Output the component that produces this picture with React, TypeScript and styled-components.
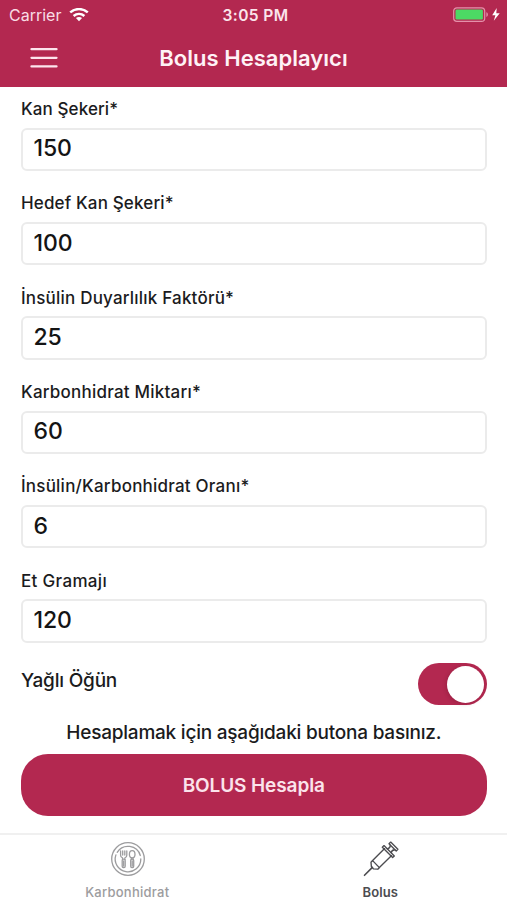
import React, { useState } from "react";
import styled, { createGlobalStyle } from "styled-components";

const brand = "#b32850";

const GlobalStyle = createGlobalStyle`
  * { box-sizing: border-box; }
  body { margin: 0; background: #fff; font-family: Inter, "Liberation Sans", sans-serif; color: #1b1b1d; }
  button, input { font-family: inherit; }
`;

const Screen = styled.div`
  width: 507px;
  height: 900px;
  display: flex;
  flex-direction: column;
  overflow: hidden;
  background: #fff;
`;

const Header = styled.header`
  height: 87px;
  flex: none;
  background: ${brand};
  color: #fff;
`;

const StatusBar = styled.div`
  height: 29px;
  display: grid;
  grid-template-columns: 1fr auto 1fr;
  align-items: center;
  padding: 1px 6px 0 9px;
`;

const Carrier = styled.div`
  display: flex;
  align-items: center;
  gap: 8px;
  font-size: 16px;
  line-height: 20px;
  color: #f9dce5;
  letter-spacing: 0;
`;

const Clock = styled.div`
  font-size: 15.6px;
  line-height: 20px;
  padding: 1px 0 0 1px;
  font-weight: 600;
  color: #fbe4eb;
  letter-spacing: 0.35px;
`;

const Power = styled.div`
  display: flex;
  justify-content: flex-end;
  align-items: center;
`;

const TitleBar = styled.div`
  height: 58px;
  display: grid;
  grid-template-columns: 88px 1fr 88px;
  align-items: center;
`;

const MenuButton = styled.button`
  display: flex;
  border: 0;
  padding: 0;
  margin-left: 30px;
  width: 28px;
  background: none;
`;

const Title = styled.h1`
  margin: 0;
  text-align: center;
  font-size: 22px;
  line-height: 28px;
  font-weight: 600;
  color: #fff2f6;
  letter-spacing: 0.03px;
`;

const Form = styled.main`
  flex: 1;
  padding: 9px 20.5px 0 21px;
`;

const Field = styled.label`
  display: block;
  height: 94.35px;
`;

const Label = styled.span<{ $spacing: number }>`
  display: block;
  height: 31.5px;
  padding-top: 1px;
  line-height: 25px;
  font-size: 17px;
  font-weight: 500;
  white-space: nowrap;
  letter-spacing: ${(p) => p.$spacing}px;
`;

const Input = styled.input`
  display: block;
  width: 100%;
  height: 43.5px;
  padding: 0 10.5px 2px;
  border: 2px solid #ebebeb;
  border-radius: 6px;
  outline: none;
  background: #fff;
  color: #141414;
  font-size: 23px;
  font-weight: 500;
  letter-spacing: -0.1px;
`;

const ToggleRow = styled.div`
  display: flex;
  justify-content: space-between;
  height: 58px;
`;

const ToggleLabel = styled.span`
  font-size: 19px;
  line-height: 24px;
  padding-top: 7px;
  font-weight: 500;
  letter-spacing: -0.2px;
`;

const Toggle = styled.button<{ $on: boolean }>`
  display: flex;
  justify-content: ${(p) => (p.$on ? "flex-end" : "flex-start")};
  align-items: center;
  width: 69px;
  height: 42px;
  margin-top: 1px;
  padding: 0 2.5px;
  border: 0;
  border-radius: 21px;
  background: ${(p) => (p.$on ? brand : "#ddd")};
`;

const Knob = styled.span`
  width: 37px;
  height: 37px;
  border-radius: 50%;
  background: #fff;
  box-shadow: -1px 1px 4px rgba(60, 0, 20, 0.2);
`;

const Hint = styled.p`
  margin: 0;
  height: 34px;
  padding-top: 1px;
  line-height: 24px;
  text-align: center;
  white-space: nowrap;
  font-size: 19px;
  font-weight: 500;
  letter-spacing: -0.22px;
`;

const Submit = styled.button`
  display: block;
  width: 100%;
  height: 62px;
  padding: 0;
  border: 0;
  border-radius: 27px;
  background: ${brand};
  color: #fbe3eb;
  font-size: 19px;
  font-weight: 600;
  letter-spacing: -0.1px;
`;

const TabBar = styled.nav`
  height: 67px;
  flex: none;
  display: grid;
  grid-template-columns: 1fr 1fr;
  border-top: 2px solid #f0f0f0;
`;

const Tab = styled.a<{ $active?: boolean }>`
  display: flex;
  flex-direction: column;
  align-items: center;
  padding: 6px 0 0 ${(p) => (p.$active ? 0 : 1)}px;
  gap: 5px;
  color: ${(p) => (p.$active ? "#4c4c50" : "#9c9c9e")};
  font-size: 13px;
  line-height: 20px;
  font-weight: ${(p) => (p.$active ? 600 : 500)};
  letter-spacing: ${(p) => (p.$active ? 0.1 : 0.25)}px;

  svg { margin-left: 2px; }
`;

const WifiIcon = () => (
  <svg width="20" height="15" viewBox="0 0 20 15" fill="none" stroke="#fff" strokeWidth="2.5">
    <path d="M1.2 4.4C6.2 0 13.8 0 18.8 4.4" />
    <path d="M4.6 8C7.8 5.2 12.2 5.2 15.4 8" />
    <path d="M10 13.2L6.9 10.1C8.6 8.6 11.4 8.6 13.1 10.1Z" fill="#fff" stroke="none" />
  </svg>
);

const BatteryIcon = () => (
  <svg width="48" height="16" viewBox="0 0 48 16">
    <rect x="0.7" y="0.8" width="31" height="13.6" rx="3.2" fill="none" stroke="#e491aa" strokeWidth="1.2" />
    <rect x="2.5" y="2.6" width="27.4" height="10" rx="1.4" fill="#4cd964" />
    <path d="M33.4 5.3C35.4 6 35.4 9.2 33.4 9.9Z" fill="#e491aa" />
    <path d="M43.7 1L39.2 8.3H42.4L40.8 13.8L46.7 6.3H43.3Z" fill="#fff" />
  </svg>
);

const MenuIcon = () => (
  <svg width="28" height="22" viewBox="0 0 28 22" stroke="#fde5ed" strokeWidth="2.3" strokeLinecap="round">
    <path d="M1.5 2.2H26.5M1.5 10.8H26.5M1.5 19.4H26.5" />
  </svg>
);

const PlateIcon = () => (
  <svg width="36" height="36" viewBox="0 0 36 36" fill="none" stroke="currentColor" strokeWidth="1.3" strokeLinecap="round" strokeLinejoin="round">
    <circle cx="18" cy="18" r="16.3" />
    <path d="M7.2 11.3A12.8 12.8 0 0 1 30.3 14.5M30.8 18A12.8 12.8 0 1 1 5.9 13.9" />
    <path d="M10.6 10V14.2Q10.6 16.4 12.5 16.8V18.5M16.8 10V14.2Q16.8 16.4 14.9 16.8V18.5M12.7 10V14M14.8 10V14" />
    <rect x="12.2" y="18.2" width="3" height="8.3" rx="1.2" />
    <ellipse cx="22.2" cy="13.2" rx="2.8" ry="3.6" />
    <path d="M21.4 16.8V18.5M23 16.8V18.5M13.7 20V25M22.2 20V25" />
    <rect x="20.7" y="18.2" width="3" height="8.3" rx="1.2" />
  </svg>
);

const SyringeIcon = () => (
  <svg width="36" height="36" viewBox="0 0 36 36" fill="none" stroke="currentColor" strokeWidth="1.35" strokeLinecap="round" strokeLinejoin="round">
    <path d="M1.5 34.3L9.4 26.4" strokeWidth="1.6" />
    <path d="M9.6 19.6L8 21.2L8.4 25.8L10.4 27.8L14.8 28.2L16.4 26.6Z" />
    <path d="M9.6 19.6L21.6 7.6M28.6 14.6L16.4 26.6" />
    <path d="M21 4.6L31.3 14.9L29.6 16.6L19.3 6.3Z" />
    <path d="M24.3 7.9C26.6 7.4 27.4 6.6 27.3 4.1M28.1 11.7C28.7 9.5 29.5 8.7 31.9 8.7" />
    <path d="M26 2.8L27.7 1.1L34.9 8.3L33.2 10Z" />
  </svg>
);

const fields = [
  { label: "Kan Şekeri*", value: "150", spacing: 0.1 },
  { label: "Hedef Kan Şekeri*", value: "100", spacing: 0.15 },
  { label: "İnsülin Duyarlılık Faktörü*", value: "25", spacing: 0.2 },
  { label: "Karbonhidrat Miktarı*", value: "60", spacing: 0.22 },
  { label: "İnsülin/Karbonhidrat Oranı*", value: "6", spacing: 0.22 },
  { label: "Et Gramajı", value: "120", spacing: 0.33 },
];

export default function App() {
  const [fatty, setFatty] = useState(true);
  return (
    <Screen lang="tr">
      <GlobalStyle />
      <Header>
        <StatusBar>
          <Carrier>Carrier<WifiIcon /></Carrier>
          <Clock>3:05 PM</Clock>
          <Power><BatteryIcon /></Power>
        </StatusBar>
        <TitleBar>
          <MenuButton aria-label="Menü"><MenuIcon /></MenuButton>
          <Title>Bolus Hesaplayıcı</Title>
        </TitleBar>
      </Header>
      <Form>
        {fields.map((f) => (
          <Field key={f.label}>
            <Label $spacing={f.spacing}>{f.label}</Label>
            <Input defaultValue={f.value} inputMode="numeric" />
          </Field>
        ))}
        <ToggleRow>
          <ToggleLabel>Yağlı Öğün</ToggleLabel>
          <Toggle $on={fatty} role="switch" aria-checked={fatty} aria-label="Yağlı Öğün" onClick={() => setFatty(!fatty)}>
            <Knob />
          </Toggle>
        </ToggleRow>
        <Hint>Hesaplamak için aşağıdaki butona basınız.</Hint>
        <Submit>BOLUS Hesapla</Submit>
      </Form>
      <TabBar>
        <Tab><PlateIcon />Karbonhidrat</Tab>
        <Tab $active><SyringeIcon />Bolus</Tab>
      </TabBar>
    </Screen>
  );
}
